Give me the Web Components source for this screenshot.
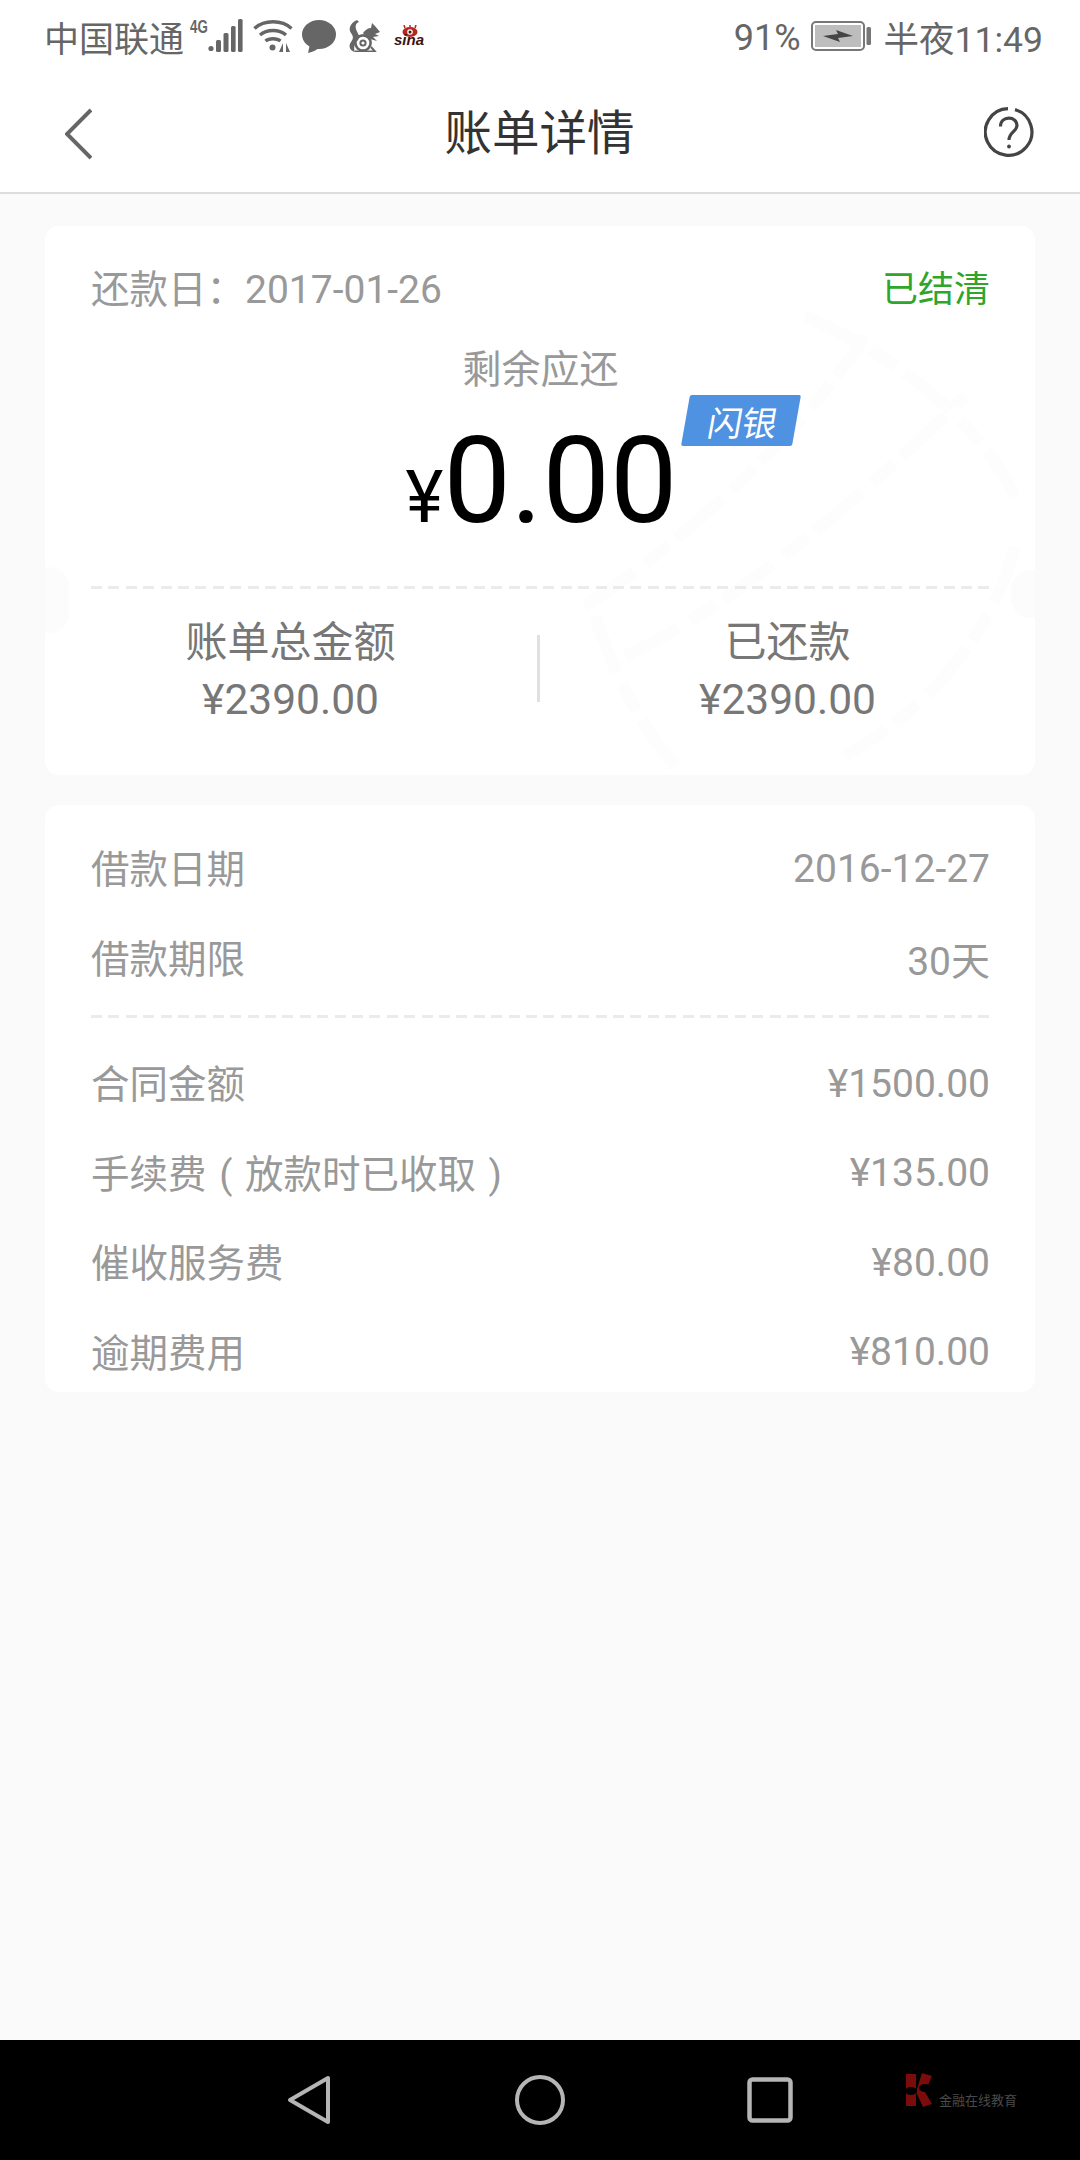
<!DOCTYPE html>
<html lang="zh">
<head>
<meta charset="utf-8">
<title>账单详情</title>
<style>
html, body { margin: 0; padding: 0; }
body { width: 1080px; height: 2160px; background: #fafafa; font-family: Roboto, "Noto Sans CJK SC", sans-serif; }
#app { display: flex; flex-direction: column; height: 2160px; }
</style>
</head>
<body>
<div id="app">
  <status-bar></status-bar>
  <app-header>账单详情</app-header>
  <page-body>
    <bill-summary></bill-summary>
    <detail-card>
      <detail-row label="借款日期" value="2016-12-27"></detail-row>
      <detail-row label="借款期限" value="30天"></detail-row>
      <dash-line></dash-line>
      <detail-row label="合同金额" value="¥1500.00"></detail-row>
      <detail-row label="手续费(放款时已收取)" value="¥135.00"></detail-row>
      <detail-row label="催收服务费" value="¥80.00"></detail-row>
      <detail-row label="逾期费用" value="¥810.00"></detail-row>
    </detail-card>
  </page-body>
  <nav-bar></nav-bar>
</div>

<script>
// the app draws this punctuation centered in a full em box
function centerPunct(text) {
    return text
        .replace(/：/g, `<span style="font-family:'Noto Sans CJK TC',sans-serif;line-height:0">：</span>`)
        .replace(/[()]/g, m => `<span style="display:inline-block;width:1em;text-align:center">${m}</span>`)
}

class StatusBar extends HTMLElement {
    constructor() {
        super()
        this.attachShadow({mode: 'open'})
    }
    connectedCallback() {
        this.shadowRoot.innerHTML = `
        <style>
        :host { display: flex; align-items: center; height: 72px; padding: 0 37px 0 44px; box-sizing: border-box; color: #666; font-size: 35px; flex: none; background: #fff; }
        svg { display: block; flex: none; }
        .four { font: bold 18px "Liberation Sans", sans-serif; color: #666; margin: 0 0 17px 6px; width: 18px; transform: scaleX(.74); transform-origin: left center; white-space: nowrap; }
        .sina { position: relative; width: 32px; height: 22px; margin-left: 14px; flex: none; }
        .sina span { position: absolute; left: 0; top: 8px; font: italic bold 15px/14px "Liberation Sans", sans-serif; color: #3a1410; }
        .sina svg { position: absolute; left: 7px; top: 0; }
        .push { flex: 1; }
        .pct { font-size: 36px; padding-top: 3px; }
        .time { margin-left: 13px; font-size: 35.5px; white-space: nowrap; }
        </style>
        <span>中国联通</span>
        <span class="four">4G</span>
        <svg width="35" height="34" viewBox="0 0 35 34" fill="#666">
          <circle cx="3" cy="29.5" r="2.6"/>
          <rect x="8" y="21" width="5" height="12" rx="1.5"/>
          <rect x="15.5" y="14" width="5" height="19" rx="1.5"/>
          <rect x="23" y="7" width="4.6" height="26" rx="1.5"/>
          <rect x="30" y="0" width="4.6" height="33" rx="1.5"/>
        </svg>
        <svg style="margin-left:10px" width="40" height="34" viewBox="0 0 40 34" fill="none" stroke="#666" stroke-width="3.4">
          <path d="M1.5 9.5C11 .5 29 .5 38.5 9.5"/>
          <path d="M7 16C14 10 26 10 33 16"/>
          <path d="M12.5 22C16 19 24 19 27.5 22"/>
          <circle cx="19.5" cy="28.5" r="3" fill="#666" stroke="none"/>
          <path d="M30 33V24L26 33ZM33 24V33L37 33Z" fill="#666" stroke="none"/>
        </svg>
        <svg style="margin-left:9px" width="34" height="33" viewBox="0 0 34 33" fill="#666">
          <ellipse cx="17" cy="14.5" rx="17" ry="14.5"/>
          <path d="M8 24L6 33C11 32 15 30 18 27Z"/>
        </svg>
        <svg style="margin-left:12px" width="32" height="32" viewBox="0 0 32 32" fill="#666">
          <path d="M9 0C2 3 0 9 3 13C6 17 5 19 3 22C0 26 2 31 7 32C5 27 7 23 10 20C13 16 9 13 8 9C7 6 8 3 11 2Z"/>
          <path d="M15 13C17 10 20 8 23 8L24 3L27 6L32 12L27 14L31 16L25 17L29 21L22 19C18 16 16 15 15 13Z"/>
          <circle cx="15" cy="23" r="7.6" fill="none" stroke="#666" stroke-width="2.6"/>
          <circle cx="15" cy="23" r="2.6" fill="none" stroke="#666" stroke-width="2"/>
          <path d="M7 31.5H27L23 27" fill="none" stroke="#666" stroke-width="2"/>
        </svg>
        <span class="sina">
          <svg width="18" height="12" viewBox="0 0 18 12"><ellipse cx="9" cy="7" rx="7.5" ry="5" fill="#b5281e"/><circle cx="9" cy="7" r="2.8" fill="#fff"/><circle cx="9" cy="7" r="1.5" fill="#3a1410"/><path d="M4 3L3 0M9 2V0M14 3L15 0" stroke="#b5281e" stroke-width="1.5"/></svg>
          <span>sina</span>
        </span>
        <span class="push"></span>
        <span class="pct">91%</span>
        <svg style="margin-left:10px" width="60" height="30" viewBox="0 0 60 30">
          <rect x="1" y="1" width="52" height="28" rx="4" fill="#fff" stroke="#777" stroke-width="2"/>
          <rect x="4" y="4" width="46" height="22" fill="#bdbdbd"/>
          <path d="M12 15L27 13L25 9L42 15L27 17L29 21Z" fill="#444"/>
          <rect x="55.5" y="6" width="4.5" height="18" rx="1.5" fill="#777"/>
        </svg>
        <span class="time">半夜11:49</span>
        `
    }
}

class AppHeader extends HTMLElement {
    constructor() {
        super()
        this.attachShadow({mode: 'open'})
    }
    connectedCallback() {
        this.shadowRoot.innerHTML = `
        <style>
        :host { display: flex; align-items: center; justify-content: space-between; height: 122px; padding: 0 46px 0 65px; box-sizing: border-box; background: #fff; border-bottom: 2px solid #ddd; flex: none; }
        .title { font-size: 47.5px; color: #333; padding: 0 0 5px 3px; }
        svg { display: block; }
        .back { margin-top: 4px; }
        .help { margin-bottom: 1px; }
        </style>
        <svg class="back" width="27" height="52" viewBox="0 0 27 52" fill="none" stroke="#666" stroke-width="4"><path d="M26 2L2 26L26 50"/></svg>
        <span class="title"><slot></slot></span>
        <svg class="help" width="50" height="50" viewBox="0 0 50 50" fill="none" stroke="#444" stroke-width="3.2">
          <path d="M31 2.6A23.3 23.3 0 1 1 24 1.7"/>
          <path d="M16.5 19.5C16.5 8.5 33 8.5 33 18.5C33 24.5 25 25 25 33"/>
          <circle cx="25" cy="39.5" r="1.9" fill="#444" stroke="none"/>
        </svg>
        `
    }
}

class PageBody extends HTMLElement {
    constructor() {
        super()
        this.attachShadow({mode: 'open'})
    }
    connectedCallback() {
        this.shadowRoot.innerHTML = `
        <style>
        :host { display: flex; flex-direction: column; gap: 30px; flex: 1; padding: 32px 45px 0; }
        </style>
        <slot></slot>
        `
    }
}

class DashLine extends HTMLElement {
    constructor() {
        super()
        this.attachShadow({mode: 'open'})
    }
    connectedCallback() {
        this.shadowRoot.innerHTML = `
        <style>
        :host { display: block; height: 3px; background: repeating-linear-gradient(90deg, #ebebeb 0 11px, transparent 11px 17.4px); }
        </style>
        `
    }
}

class BillSummary extends HTMLElement {
    constructor() {
        super()
        this.attachShadow({mode: 'open'})
    }
    connectedCallback() {
        this.shadowRoot.innerHTML = `
        <style>
        :host { display: block; position: relative; height: 549px; background: #fff; border-radius: 14px; padding: 0 45px 0 46px; box-sizing: border-box; overflow: hidden; }
        .stamp { position: absolute; left: 520px; top: 60px; }
        .notch { position: absolute; top: 341px; width: 24px; height: 66px; background: #fcfcfc; }
        .notch.l { left: 0; border-radius: 0 20px 20px 0; }
        .notch.r { right: 0; top: 344px; height: 48px; border-radius: 20px 0 0 20px; }
        .top, .sub, .amount, dash-line, .stats, .badge { position: relative; }
        .top { display: flex; justify-content: space-between; align-items: flex-start; height: 128px; padding-top: 38px; box-sizing: border-box; line-height: 52px; font-size: 38.5px; color: #999; }
        .top .digits { font-size: 39px; }
        .done { color: #2fa52b; font-size: 36px; }
        .sub { text-align: center; font-size: 39px; line-height: 52px; color: #999; margin-top: -10px; }
        .amount { display: flex; justify-content: center; align-items: baseline; height: 170px; line-height: 170px; color: #000; }
        .amount .yen { font-size: 72px; margin-left: 2px; }
        .amount .num { font-size: 120px; }
        .badge { position: absolute; left: 636px; top: 169px; width: 111px; height: 51px; padding-left: 4px; box-sizing: border-box; background: #4f92e2; transform: skewX(-10deg); transform-origin: bottom left; border-radius: 2px; display: flex; align-items: center; justify-content: center; color: #fff; font-size: 34.5px; }
        dash-line { margin-top: 20px; }
        .stats { display: grid; grid-template-columns: 491px 1fr; margin: 0 -45px 0 -46px; padding-top: 25px; }
        .stat { display: flex; flex-direction: column; align-items: center; color: #777; font-size: 42px; line-height: 57px; }
        .stat + .stat { margin-left: 4px; }
        .stat .val { font-size: 42.5px; }
        .bar { position: absolute; left: 492px; top: 46px; width: 3px; height: 67px; background: #e0e0e0; }
        </style>
        <svg class="stamp" width="470" height="489" viewBox="0 0 470 489" fill="none" stroke="#fdfdfd" stroke-width="12" stroke-dasharray="60 14 30 10">
          <path d="M20 320C130 250 250 130 300 50"/>
          <path d="M60 370C170 320 310 200 400 110"/>
          <path d="M240 30C330 70 410 130 450 210"/>
          <path d="M450 260C430 340 370 420 280 470"/>
          <path d="M30 330C50 390 70 430 110 480"/>
        </svg>
        <span class="notch l"></span><span class="notch r"></span>
        <div class="top"><span>还款日${centerPunct('：')}<span class="digits">2017-01-26</span></span><span class="done">已结清</span></div>
        <div class="sub">剩余应还</div>
        <div class="amount"><span class="yen">¥</span><span class="num">0.00</span></div>
        <span class="badge">闪银</span>
        <dash-line></dash-line>
        <div class="stats">
          <div class="stat"><span>账单总金额</span><span class="val">¥2390.00</span></div>
          <div class="stat"><span>已还款</span><span class="val">¥2390.00</span></div>
          <span class="bar"></span>
        </div>
        `
    }
}

class DetailCard extends HTMLElement {
    constructor() {
        super()
        this.attachShadow({mode: 'open'})
    }
    connectedCallback() {
        this.shadowRoot.innerHTML = `
        <style>
        :host { display: block; height: 587px; background: #fff; border-radius: 14px; padding: 19px 45px 0 46px; box-sizing: border-box; }
        ::slotted(dash-line) { margin: 12px 0 21px; }
        </style>
        <slot></slot>
        `
    }
}

class DetailRow extends HTMLElement {
    constructor() {
        super()
        this.attachShadow({mode: 'open'})
    }
    connectedCallback() {
        this.shadowRoot.innerHTML = `
        <style>
        :host { display: flex; justify-content: space-between; align-items: center; height: 89.5px; font-size: 38.5px; color: #999; white-space: nowrap; }
        .label { padding-bottom: 5px; }
        .value { font-size: 39px; }
        </style>
        <span class="label">${centerPunct(this.getAttribute('label'))}</span>
        <span class="value">${this.getAttribute('value')}</span>
        `
    }
}

class NavBar extends HTMLElement {
    constructor() {
        super()
        this.attachShadow({mode: 'open'})
    }
    connectedCallback() {
        this.shadowRoot.innerHTML = `
        <style>
        :host { display: block; position: relative; height: 120px; background: #000; flex: none; }
        .keys { display: flex; align-items: center; height: 120px; padding-left: 287px; }
        .mark { position: absolute; left: 905px; top: 33px; }
        .cap { position: absolute; left: 939px; top: 53px; font-size: 13px; line-height: 16px; color: #4a4a4a; }
        svg { display: block; }
        </style>
        <div class="keys">
          <svg width="44" height="50" viewBox="0 0 44 50" fill="none" stroke="#b5b5b5" stroke-width="4" stroke-linejoin="round"><path d="M41 3V47L3 25Z"/></svg>
          <svg style="margin-left:184px" width="50" height="50" viewBox="0 0 50 50" fill="none" stroke="#b5b5b5" stroke-width="4"><circle cx="25" cy="25" r="23"/></svg>
          <svg style="margin-left:182px" width="46" height="46" viewBox="0 0 46 46" fill="none" stroke="#b5b5b5" stroke-width="4.5"><rect x="2.5" y="2.5" width="41" height="41" rx="3"/></svg>
        </div>
        <svg class="mark" width="28" height="34" viewBox="0 0 28 34" fill="#7a0c0c">
          <rect x="1" y="1" width="10" height="32"/>
          <path d="M17 0L27 3L20 19L27 31L18 34L11 19Z"/>
          <ellipse cx="6" cy="18" rx="6" ry="4" fill="#000"/>
          <ellipse cx="20" cy="15" rx="6" ry="4" fill="#000"/>
        </svg>
        <span class="cap">金融在线教育</span>
        `
    }
}

customElements.define('status-bar', StatusBar)
customElements.define('app-header', AppHeader)
customElements.define('page-body', PageBody)
customElements.define('dash-line', DashLine)
customElements.define('bill-summary', BillSummary)
customElements.define('detail-card', DetailCard)
customElements.define('detail-row', DetailRow)
customElements.define('nav-bar', NavBar)
</script>
</body>
</html>
